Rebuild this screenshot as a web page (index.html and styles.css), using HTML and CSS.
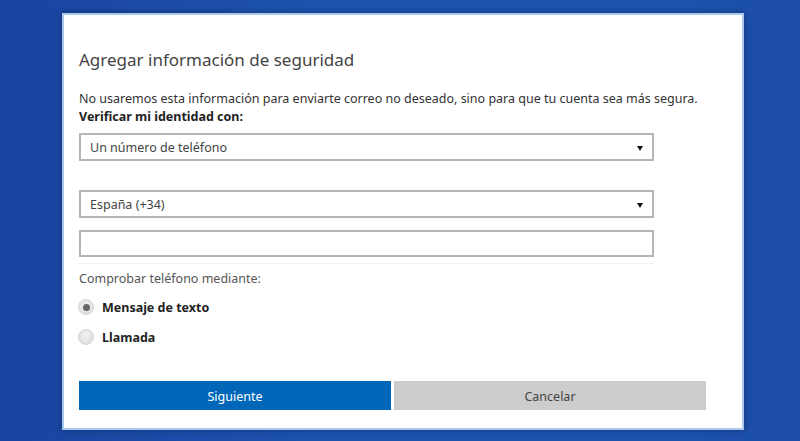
FILE: index.html
```html
<!DOCTYPE html>
<html lang="es">
<head>
  <meta charset="UTF-8">
  <title>Agregar información de seguridad</title>
  <link rel="stylesheet" href="styles.css">
</head>
<body>
  <div class="dialog">
    <h1 class="title">Agregar información de seguridad</h1>
    <p class="intro">No usaremos esta información para enviarte correo no deseado, sino para que tu cuenta sea más segura.</p>
    <p class="label-bold">Verificar mi identidad con:</p>

    <!-- Method select -->
    <div class="select method">
      <span>Un número de teléfono</span>
      <i class="arrow"></i>
    </div>

    <!-- Country + phone number -->
    <div class="select country">
      <span>España (+34)</span>
      <i class="arrow"></i>
    </div>
    <div class="text-input"></div>
    <div class="dots"></div>

    <p class="label">Comprobar teléfono mediante:</p>
    <div class="radios">
      <label class="radio"><span class="dot checked"></span>Mensaje de texto</label>
      <label class="radio"><span class="dot"></span>Llamada</label>
    </div>

    <div class="buttons">
      <button class="btn primary">Siguiente</button>
      <button class="btn secondary">Cancelar</button>
    </div>
  </div>
</body>
</html>
```

FILE: styles.css
```css
html, body {
  height: 100%;
}
body {
  margin: 0;
  font-family: "Noto Sans", "Open Sans", sans-serif;
  background: linear-gradient(90deg, #1a44a0 0%, #1d52ad 40%, #1d52ad 85%, #1b4ca8 100%);
  overflow: hidden;
}
.dialog {
  box-sizing: border-box;
  width: 682px;
  height: 417px;
  margin: 13px 0 0 62px;
  padding: 0 36px 0 15px;
  background-color: #fff;
  border: 2px solid #a9c8ec;
  box-shadow: 0 0 6px rgba(0, 0, 0, 0.35);
}
.title {
  margin: 33px 0 0;
  font-size: 17px;
  line-height: 24px;
  font-weight: normal;
  color: #444;
}
.intro {
  margin: 18px 0 0;
  font-size: 12.5px;
  line-height: 18px;
  color: #333;
}
.label-bold {
  margin: 0;
  font-size: 12.5px;
  line-height: 18px;
  font-weight: bold;
  color: #222;
}
.select, .text-input {
  box-sizing: border-box;
  width: 575px;
  height: 28px;
  border: 2px solid #b5b5b5;
  display: flex;
  align-items: center;
  padding: 0 9px;
  font-size: 12.5px;
  color: #444;
}
.select span {
  flex: 1;
}
.arrow {
  width: 0;
  height: 0;
  border-left: 3px solid transparent;
  border-right: 3px solid transparent;
  border-top: 5px solid #111;
  margin-top: 2px;
}
.method {
  margin-top: 7px;
}
.country {
  margin-top: 29px;
}
.text-input {
  margin-top: 12px;
  height: 27px;
}
.dots {
  width: 575px;
  margin-top: 6px;
  border-top: 1px dotted #e6e6e6;
}
.label {
  margin: 6px 0 0;
  font-size: 12.5px;
  line-height: 18px;
  color: #555;
}
.radios {
  margin-top: 10px;
  display: flex;
  flex-direction: column;
  gap: 12px;
}
.radio {
  display: flex;
  align-items: center;
  height: 18px;
  font-size: 12.5px;
  font-weight: bold;
  color: #222;
}
.dot {
  box-sizing: border-box;
  width: 16px;
  height: 16px;
  margin: 0 8px 0 -1px;
  border-radius: 50%;
  border: 1px solid #d4d4d4;
  background: radial-gradient(circle at 50% 40%, #f2f2f2, #d8d8d8);
  display: flex;
  align-items: center;
  justify-content: center;
}
.dot.checked::after {
  content: "";
  width: 7px;
  height: 7px;
  border-radius: 50%;
  background-color: #666;
}
.buttons {
  margin-top: 35px;
  display: flex;
  gap: 3px;
}
.btn {
  height: 29px;
  padding-top: 2px;
  border: none;
  font-family: inherit;
  font-size: 12.5px;
  cursor: pointer;
}
.primary {
  width: 312px;
  background-color: #0067b8;
  color: #fff;
}
.secondary {
  width: 312px;
  background-color: #cccccc;
  color: #444;
}
```
